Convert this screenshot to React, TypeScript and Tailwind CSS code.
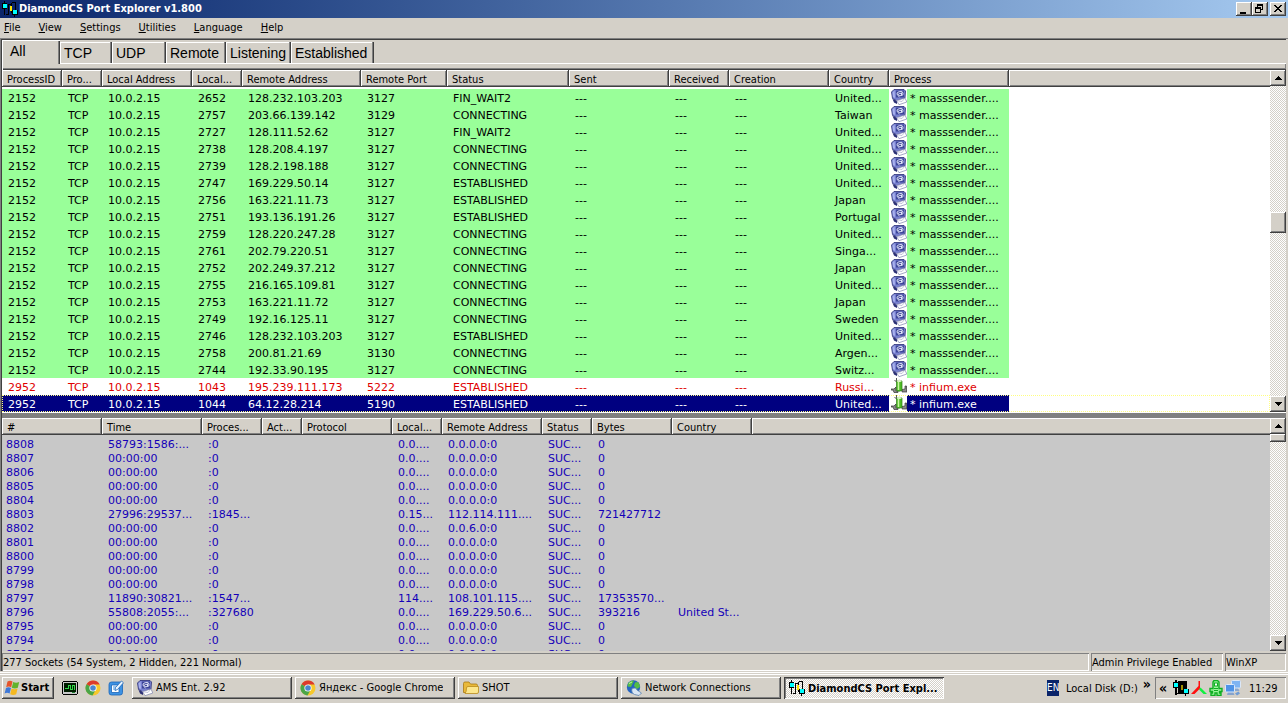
import { type ReactNode } from "react";
import clsx from "clsx";

const MENU = ["File", "View", "Settings", "Utilities", "Language", "Help"];

const TABS = [
  { label: "TCP", width: "w-[52px]" },
  { label: "UDP", width: "w-[54px]" },
  { label: "Remote", width: "w-[60px]" },
  { label: "Listening", width: "w-[65px]" },
  { label: "Established", width: "w-[83px]" },
];

type Column = { label: string; width: string };

const SOCKET_COLUMNS: Column[] = [
  { label: "ProcessID", width: "w-[60px]" },
  { label: "Pro...", width: "w-[40px]" },
  { label: "Local Address", width: "w-[90px]" },
  { label: "Local...", width: "w-[50px]" },
  { label: "Remote Address", width: "w-[119px]" },
  { label: "Remote Port", width: "w-[86px]" },
  { label: "Status", width: "w-[122px]" },
  { label: "Sent", width: "w-[100px]" },
  { label: "Received", width: "w-[60px]" },
  { label: "Creation", width: "w-[100px]" },
  { label: "Country", width: "w-[60px]" },
  { label: "Process", width: "w-[120px]" },
];

const LOG_COLUMNS: Column[] = [
  { label: "#", width: "w-[100px]" },
  { label: "Time", width: "w-[100px]" },
  { label: "Proces...", width: "w-[60px]" },
  { label: "Act...", width: "w-[40px]" },
  { label: "Protocol", width: "w-[90px]" },
  { label: "Local...", width: "w-[50px]" },
  { label: "Remote Address", width: "w-[100px]" },
  { label: "Status", width: "w-[50px]" },
  { label: "Bytes", width: "w-[80px]" },
  { label: "Country", width: "w-[80px]" },
];

type Kind = "normal" | "hidden" | "selected";
type Socket = [string, string, string, string, string, string, Kind];

// pid, local port, remote address, remote port, status, country, kind
const SOCKETS: Socket[] = [
  ["2152", "2652", "128.232.103.203", "3127", "FIN_WAIT2", "United...", "normal"],
  ["2152", "2757", "203.66.139.142", "3129", "CONNECTING", "Taiwan", "normal"],
  ["2152", "2727", "128.111.52.62", "3127", "FIN_WAIT2", "United...", "normal"],
  ["2152", "2738", "128.208.4.197", "3127", "CONNECTING", "United...", "normal"],
  ["2152", "2739", "128.2.198.188", "3127", "CONNECTING", "United...", "normal"],
  ["2152", "2747", "169.229.50.14", "3127", "ESTABLISHED", "United...", "normal"],
  ["2152", "2756", "163.221.11.73", "3127", "ESTABLISHED", "Japan", "normal"],
  ["2152", "2751", "193.136.191.26", "3127", "ESTABLISHED", "Portugal", "normal"],
  ["2152", "2759", "128.220.247.28", "3127", "CONNECTING", "United...", "normal"],
  ["2152", "2761", "202.79.220.51", "3127", "CONNECTING", "Singa...", "normal"],
  ["2152", "2752", "202.249.37.212", "3127", "CONNECTING", "Japan", "normal"],
  ["2152", "2755", "216.165.109.81", "3127", "CONNECTING", "United...", "normal"],
  ["2152", "2753", "163.221.11.72", "3127", "CONNECTING", "Japan", "normal"],
  ["2152", "2749", "192.16.125.11", "3127", "CONNECTING", "Sweden", "normal"],
  ["2152", "2746", "128.232.103.203", "3127", "ESTABLISHED", "United...", "normal"],
  ["2152", "2758", "200.81.21.69", "3130", "CONNECTING", "Argen...", "normal"],
  ["2152", "2744", "192.33.90.195", "3127", "CONNECTING", "Switz...", "normal"],
  ["2952", "1043", "195.239.111.173", "5222", "ESTABLISHED", "Russi...", "hidden"],
  ["2952", "1044", "64.12.28.214", "5190", "ESTABLISHED", "United...", "selected"],
];

const emptyLog = (id: string, remote = "0.0.0.0:0") => [
  id, "00:00:00", ":0", "", "", "0.0....", remote, "SUC...", "0", "",
];

const LOG: string[][] = [
  ["8808", "58793:1586:...", ":0", "", "", "0.0....", "0.0.0.0:0", "SUC...", "0", ""],
  emptyLog("8807"),
  emptyLog("8806"),
  emptyLog("8805"),
  emptyLog("8804"),
  ["8803", "27996:29537...", ":1845...", "", "", "0.15...", "112.114.111....", "SUC...", "721427712", ""],
  emptyLog("8802", "0.0.6.0:0"),
  emptyLog("8801"),
  emptyLog("8800"),
  emptyLog("8799"),
  emptyLog("8798"),
  ["8797", "11890:30821...", ":1547...", "", "", "114....", "108.101.115....", "SUC...", "17353570...", ""],
  ["8796", "55808:2055:...", ":327680", "", "", "0.0....", "169.229.50.6...", "SUC...", "393216", "United St..."],
  emptyLog("8795"),
  emptyLog("8794"),
  emptyLog("8793"),
];

const RAISED =
  "bg-[#d4d0c8] shadow-[inset_-1px_-1px_#404040,inset_1px_1px_#ffffff,inset_-2px_-2px_#808080]";
const SUNKEN = "shadow-[inset_1px_1px_#808080,inset_-1px_-1px_#ffffff]";
const DITHER =
  "bg-[repeating-conic-gradient(#ffffff_0_25%,#d4d0c8_0_50%)] bg-[length:2px_2px]";

/* ---------- icons ---------- */

function PortIcon({ dense = false }: { dense?: boolean }) {
  return (
    <svg width="16" height="16" viewBox="0 0 16 16" className="shrink-0" shapeRendering="crispEdges" aria-hidden>
      {dense && <path d="M5 1h8v8h-3v5H5zM2 0h2v15H2z" fill="#000" />}
      <path
        d="M2.5 0v3M2.5 8v6M4 13.5h2.5M6.5 3v10M6.5 3.5h3M9.5 2v6M13.500 1v9M10 1.5h4M12.500 13v3M9.5 8v4"
        fill="none"
        stroke="#000"
      />
      <rect x="0" y="2" width="5" height="6" fill="#000" />
      <rect x="1" y="3" width="4" height="4" fill="#00ffff" />
      <rect x="10" y="9" width="6" height="5" fill="#000" />
      <rect x="11" y="9" width="4" height="4" fill="#00ffff" />
      <rect x="8" y="5" width="2" height="5" fill={dense ? "#a09000" : "#ffe600"} />
    </svg>
  );
}

function MailIcon() {
  return (
    <svg width="16" height="16" viewBox="0 0 16 16" className="shrink-0" aria-hidden>
      <path d="M3 .5h10L14.500 2l-.5 7-4 1.500L6 12 1.500 9.500.5 3Z" fill="#7880cf" stroke="#2a2d74" strokeWidth=".8" />
      <path d="M1.500 3.500 3.500 1.500 4 9 2 8Z" fill="#aab2ee" />
      <path d="M5 1.500h8v7H5Z" fill="#3d4699" />
      <path
        d="M10.500 4.500q-3-1-3 1t3 1V3.500M10.500 6.500q2 0 1.500-2.500T8.500 2.500 6 5t2.500 3"
        fill="none"
        stroke="#eef0ff"
        strokeWidth=".9"
      />
      <path d="M1.500 10 3 13.500 6 15V12Z" fill="#2c3075" />
      <path d="m5.500 11.500 8.500-2.500 1.800 4L8 15.700Z" fill="#fff" stroke="#7d83ad" strokeWidth=".7" />
      <path d="m5.500 11.500 5.500 1L14 9" fill="none" stroke="#a7abc9" strokeWidth=".7" />
    </svg>
  );
}

function InfiumIcon() {
  return (
    <svg width="16" height="16" viewBox="0 0 16 16" className="shrink-0" aria-hidden>
      <path d="M3.500 2 6 4.500M5.500 0v4" stroke="#555" />
      <path d="M0 11h3l2-2v4h2v1.500H3L2 12H0ZM15.500 8v4.500H16V14h-5v-2.500l3-.5V8Z" fill="#8a8a8a" stroke="#333" strokeWidth=".7" />
      <path d="M5.500 3q2.500-1.500 5.500 0v9.500q-3 1.500-5.500 0Z" fill="#4dbb25" stroke="#2b7a14" strokeWidth=".7" />
      <path d="M7.500 4v8" stroke="#c9f7a2" strokeWidth="1.500" />
      <ellipse cx="8.200" cy="3" rx="2.600" ry="1" fill="#e3f5d0" />
    </svg>
  );
}

function ChromeIcon() {
  return (
    <svg width="16" height="16" viewBox="0 0 16 16" className="shrink-0" aria-hidden>
      <circle cx="8" cy="8" r="7.500" fill="#f6c82c" />
      <path d="M8 8 1.500 4.200A7.500 7.500 0 0 1 14.700 4.500L8 4.500Z" fill="#dc3a2c" />
      <path d="M1.500 4.200A7.500 7.500 0 0 0 7.500 15.500L10 11 8 8Z" fill="#4aa548" />
      <circle cx="8" cy="8" r="3.600" fill="#fff" />
      <circle cx="8" cy="8" r="2.800" fill="#4c86cf" />
    </svg>
  );
}

function WindowsIcon() {
  return (
    <svg width="16" height="16" viewBox="0 0 16 16" className="shrink-0" aria-hidden>
      <path d="M3.500 1.500q2.500-1.500 5 0L7.200 7.200q-2.500-1.300-5 0Z" fill="#e5542a" />
      <path d="M9.200 2q2.800 1.300 6 0L13.800 7.800q-2.800 1.300-6 0Z" fill="#62b32c" />
      <path d="M2 8q2.500-1.300 5 0L5.600 13.500q-2.500-1.300-5 0Z" fill="#3e78d8" />
      <path d="M7.600 8.600q2.800 1.300 6 0L12.200 14.300q-2.800 1.300-6 0Z" fill="#f5b921" />
    </svg>
  );
}

function MonitorIcon() {
  return (
    <svg width="16" height="16" viewBox="0 0 16 16" className="shrink-0" shapeRendering="crispEdges" aria-hidden>
      <path d="M1 1h14v1h1v12h-1v1H1v-1H0V2h1z" fill="#000" />
      <rect x="1" y="2" width="14" height="12" fill="#c9c9c9" />
      <rect x="2" y="3" width="12" height="9" fill="#001c00" />
      <path d="M3 8.500h3V5.500h2v4h2V5.500h2v4h1" stroke="#32d848" fill="none" />
      <path d="M10 12.500h3" stroke="#208030" />
    </svg>
  );
}

function DesktopIcon() {
  return (
    <svg width="16" height="16" viewBox="0 0 16 16" className="shrink-0" aria-hidden>
      <rect x="1" y="2" width="13.500" height="13" rx="2.500" fill="#3d92e3" stroke="#1b64b8" strokeWidth=".8" />
      <path d="M3.500 5H11v7.500H3.500Z" fill="#fff" stroke="#1b64b8" strokeWidth=".8" />
      <path d="M5 7h4M5 9h2" stroke="#3d92e3" />
      <path d="m7 10.500.5-3L13.500 1l2 1.800L9.500 9.500Z" fill="#e9f4ff" stroke="#1b64b8" strokeWidth=".8" />
    </svg>
  );
}

function FolderIcon() {
  return (
    <svg width="16" height="16" viewBox="0 0 16 16" className="shrink-0" aria-hidden>
      <path d="M.5 12.500V3.500Q.5 2 2 2h4l1.500 2H13q1.500 0 1.500 1.500v7Z" fill="#e9b93a" stroke="#a87812" strokeWidth=".8" />
      <path d="M2 13.500Q3.500 12 3.500 8q0-1.500 1.500-1.500h10.500V12q0 1.500-1.500 1.500Z" fill="#fce68c" stroke="#b98a1c" strokeWidth=".8" />
    </svg>
  );
}

function GlobeIcon() {
  return (
    <svg width="16" height="16" viewBox="0 0 16 16" className="shrink-0" aria-hidden>
      <circle cx="7.500" cy="7" r="6.700" fill="#2463c0" />
      <path d="M2 3.500Q4 .5 8 .5L7 3 5 7 1.500 6.500ZM9 2.500l3-.5q2 2 2 5l-3 2-3-3Z" fill="#55bd45" />
      <path d="M3 3.500 6 2" stroke="#c4f0a8" />
      <path d="M6 8.500q4.500-1.500 5 1.500l4.500 3-2.500 2.500-4.500-1Q5 13 6 8.500Z" fill="#d9e6f4" stroke="#5b82ae" strokeWidth=".8" />
    </svg>
  );
}

function NetworkIcon() {
  return (
    <svg width="16" height="16" viewBox="0 0 16 16" className="shrink-0" aria-hidden>
      <path d="M9 8h4l1.500 3H8Z" fill="#8aa6cc" />
      <rect x="6.500" y=".5" width="9" height="7.500" rx="1" fill="#7fb4f2" stroke="#dbe7f7" />
      <path d="M3 11.500h5l1.500 3.500H2Z" fill="#86a3cc" />
      <rect x=".5" y="4.500" width="9" height="7.500" rx="1" fill="#4f93e6" stroke="#dce9fa" />
      <path d="m10 13.500 3.500-2 1.500 2-3 2Z" fill="#6f9cd6" />
    </svg>
  );
}

function SpikeIcon() {
  return (
    <svg width="16" height="16" viewBox="0 0 16 16" className="shrink-0" aria-hidden>
      <path d="M7.500 1H9v7.500L3.500 14H0L7.500 6Z" fill="#ff1010" />
      <path d="M9.500 7.500 16 14h-3.500L8 9.500Z" fill="#10f040" />
    </svg>
  );
}

function PhoneIcon() {
  return (
    <svg width="14" height="16" viewBox="0 0 14 16" className="shrink-0" aria-hidden>
      <path
        d="M5 .5h3.500L10 2v6.500h3v3h-2.500V13H12v2.500H8V13H6v2.500H2V13h1.500v-1.500H1v-3h3V2Z"
        fill="#9af59a"
        stroke="#0fae22"
        strokeWidth="1.400"
      />
      <rect x="5.500" y="3" width="3" height="3" fill="#fff" stroke="#0fae22" />
      <path d="M5 8.500h4M5 10.500h4" stroke="#0fae22" />
    </svg>
  );
}

/* ---------- pieces ---------- */

function TitleButton({ label, children }: { label: string; children: ReactNode }) {
  return (
    <button type="button" aria-label={label} className={clsx("h-[14px] w-4", RAISED)}>
      <svg width="16" height="14" viewBox="0 0 16 14" shapeRendering="crispEdges" aria-hidden>
        {children}
      </svg>
    </button>
  );
}

function ScrollButton({ up = false }: { up?: boolean }) {
  return (
    <button
      type="button"
      aria-label={up ? "Scroll up" : "Scroll down"}
      className={clsx("flex h-4 w-4 shrink-0 items-center justify-center", RAISED)}
    >
      <svg width="7" height="4" viewBox="0 0 7 4" shapeRendering="crispEdges" aria-hidden>
        <path d={up ? "M3 0h1v1h1v1h1v1h1v1H0V3h1V2h1V1h1Z" : "M0 0h7v1H6v1H5v1H4v1H3V3H2V2H1V1H0Z"} />
      </svg>
    </button>
  );
}

function ScrollBar({ children }: { children: ReactNode }) {
  return (
    <div className={clsx("flex w-4 shrink-0 flex-col", DITHER)}>
      <ScrollButton up />
      <div className="min-h-0 flex-1">{children}</div>
      <ScrollButton />
    </div>
  );
}

function HeaderRow({ columns }: { columns: Column[] }) {
  return (
    <thead>
      <tr>
        {columns.map((column) => (
          <th key={column.label} scope="col" className={clsx("p-0 pb-[2px] text-left font-normal", column.width)}>
            <div className={clsx("h-[17px] overflow-hidden pt-[2px] pl-[5px] leading-[15px] whitespace-nowrap", RAISED)}>
              {column.label}
            </div>
          </th>
        ))}
        <td className="p-0 pb-[2px]">
          <div className="h-[17px] bg-[#d4d0c8] shadow-[inset_0_-1px_#404040,inset_1px_1px_#ffffff,inset_0_-2px_#808080]" />
        </td>
      </tr>
    </thead>
  );
}

const ROW_STYLE: Record<Kind, string> = {
  normal: "text-black",
  hidden: "text-[#e00000]",
  selected: "text-white outline-1 -outline-offset-1 outline-dotted outline-[#ffff80]",
};

const CELL_STYLE: Record<Kind, string> = {
  normal: "bg-[#99ff99]",
  hidden: "bg-white",
  selected: "bg-[#000080]",
};

function SocketTable() {
  return (
    <table className="w-full table-fixed border-collapse">
      <HeaderRow columns={SOCKET_COLUMNS} />
      <tbody className="font-['DejaVu_Sans',sans-serif]">
        {SOCKETS.map(([pid, port, remote, remotePort, status, country, kind]) => {
          const cells = [pid, "TCP", "10.0.2.15", port, remote, remotePort, status, "---", "---", "---", country];
          return (
            <tr key={port} className={ROW_STYLE[kind]}>
              {cells.map((cell, i) => (
                <td
                  key={i}
                  className={clsx("h-[17px] p-0 pt-[2px] pl-[6px] leading-[15px] whitespace-nowrap", CELL_STYLE[kind])}
                >
                  {cell}
                </td>
              ))}
              <td className={clsx("h-[17px] p-0 whitespace-nowrap", CELL_STYLE[kind])}>
                <div className="flex h-[17px]">
                  <span className="flex w-[18px] shrink-0 justify-end bg-white">
                    {kind === "normal" ? <MailIcon /> : <InfiumIcon />}
                  </span>
                  <span className="pt-[2px] pl-[3px] leading-[15px]">
                    * {kind === "normal" ? "masssender...." : "infium.exe"}
                  </span>
                </div>
              </td>
            </tr>
          );
        })}
      </tbody>
    </table>
  );
}

function LogTable() {
  return (
    <table className="w-full table-fixed border-collapse">
      <HeaderRow columns={LOG_COLUMNS} />
      <tbody className="font-['DejaVu_Sans',sans-serif] text-[#1400b8]">
        {LOG.map((row) => (
          <tr key={row[0]}>
            {row.map((cell, i) => (
              <td
                key={i}
                className={clsx("h-[14px] p-0 pt-[2px] leading-[12px] whitespace-nowrap", i === 0 ? "pl-1" : "pl-[6px]")}
              >
                {cell}
              </td>
            ))}
          </tr>
        ))}
      </tbody>
    </table>
  );
}

function TaskButton({ icon, label }: { icon: ReactNode; label: string }) {
  return (
    <button type="button" className={clsx("flex h-[22px] w-40 items-center gap-[3px] pl-[5px] text-left", RAISED)}>
      {icon}
      <span className="truncate pt-px">{label}</span>
    </button>
  );
}

export default function App() {
  return (
    <div className="flex h-screen flex-col overflow-hidden bg-[#d4d0c8] font-['DejaVu_Sans_Condensed','DejaVu_Sans',sans-serif] text-[11px] text-black">
      <header className="flex h-[18px] shrink-0 items-center bg-linear-to-r from-[#0a246a] to-[#a6caf0] px-[2px]">
        <PortIcon />
        <h1 className="flex-1 pt-px pl-px font-bold text-white">DiamondCS Port Explorer v1.800</h1>
        <div className="flex gap-[2px]">
          <div className="flex">
            <TitleButton label="Minimize">
              <path d="M4 10h6v2H4z" />
            </TitleButton>
            <TitleButton label="Restore">
              <path d="M5 2h6v6H9V7h1V4H6v1H5zM3 5h6v6H3zM4 7v3h4V7z" fillRule="evenodd" />
            </TitleButton>
          </div>
          <TitleButton label="Close">
            <path d="M4 3h2v1h1v1h2V4h1V3h2v1h-1v1h-1v1H9v1h1v1h1v1h1v1h-2V9H9V8H7v1H6v1H4V9h1V8h1V7h1V6H6V5H5V4H4z" />
          </TitleButton>
        </div>
      </header>

      <nav className="flex h-5 shrink-0 items-center gap-[18px] pt-px pl-1">
        {MENU.map((item) => (
          <button key={item} type="button">
            <span className="underline">{item[0]}</span>
            {item.slice(1)}
          </button>
        ))}
      </nav>

      <main className="flex min-h-0 flex-1 flex-col border-t border-l border-[#808080] pr-[2px]">
        <div className="flex min-h-0 flex-1 flex-col border-t border-l border-[#404040]">
          <div role="tablist" className="flex h-6 shrink-0 items-end font-['Liberation_Sans',Arial,sans-serif] text-[14px]">
            <button
              type="button"
              role="tab"
              aria-selected
              className="flex h-6 w-[58px] items-start border-t border-l border-white pt-[2px] pl-[7px] leading-[17px] shadow-[inset_-1px_0_#404040,inset_-2px_0_#808080]"
            >
              All
            </button>
            {TABS.map((tab) => (
              <button
                key={tab.label}
                type="button"
                role="tab"
                aria-selected={false}
                className={clsx(
                  "flex h-[22px] items-center border-b border-white pl-1 leading-[18px] shadow-[inset_-1px_0_#404040,inset_-2px_0_#808080,inset_1px_1px_#ffffff]",
                  tab.width,
                )}
              >
                {tab.label}
              </button>
            ))}
            <div className="h-px flex-1 bg-white" />
          </div>
          <div className="h-[6px] shrink-0 border-l border-white shadow-[inset_0_-1px_#404040,inset_-1px_-2px_#808080]" />

          <section aria-label="Sockets" className="flex shrink-0 bg-white pb-px">
            <div className="min-w-0 flex-1 overflow-hidden">
              <SocketTable />
            </div>
            <ScrollBar>
              <div className="flex h-full flex-col">
                <div className="grow-126" />
                <div className={clsx("h-[21px] shrink-0", RAISED)} />
                <div className="grow-164" />
              </div>
            </ScrollBar>
          </section>

          <div className="h-[5px] shrink-0 bg-[#808080]" />

          <section aria-label="Packet log" className="flex min-h-0 flex-1 bg-[#c8c8c8]">
            <div className="min-w-0 flex-1 overflow-hidden">
              <LogTable />
            </div>
            <ScrollBar>
              <div className={clsx("h-[8px]", RAISED)} />
            </ScrollBar>
          </section>

          <footer className="flex h-[20px] shrink-0 gap-[2px] pt-[2px]">
            <div className={clsx("min-w-0 flex-1 pt-px pl-px leading-[17px]", SUNKEN)}>
              277 Sockets (54 System, 2 Hidden, 221 Normal)
            </div>
            <div className={clsx("w-[132px] pt-px pl-px leading-[17px]", SUNKEN)}>Admin Privilege Enabled</div>
            <div className={clsx("w-[61px] pt-px pl-px leading-[17px]", SUNKEN)}>WinXP</div>
          </footer>
        </div>
      </main>

      <div className="flex h-8 shrink-0 items-center gap-[3px] px-[2px] pt-[2px] shadow-[inset_0_1px_#d4d0c8,inset_0_2px_#ffffff,inset_0_3px_#d4d0c8,inset_0_4px_#ffffff]">
        <button type="button" className={clsx("flex h-[22px] w-[52px] items-center gap-px pl-[2px] font-bold", RAISED)}>
          <WindowsIcon />
          <span className="pt-px">Start</span>
        </button>
        <div className="flex w-[72px] items-center gap-[7px] pl-[5px]">
          <button type="button" aria-label="Monitor"><MonitorIcon /></button>
          <button type="button" aria-label="Chrome"><ChromeIcon /></button>
          <button type="button" aria-label="Show desktop"><DesktopIcon /></button>
        </div>
        <TaskButton icon={<MailIcon />} label="AMS Ent. 2.92" />
        <TaskButton icon={<ChromeIcon />} label="Яндекс - Google Chrome" />
        <TaskButton icon={<FolderIcon />} label="SHOT" />
        <TaskButton icon={<GlobeIcon />} label="Network Connections" />
        <button
          type="button"
          className={clsx(
            "flex h-[22px] w-40 items-center gap-[3px] pl-[5px] text-left font-bold shadow-[inset_1px_1px_#404040,inset_-1px_-1px_#ffffff,inset_2px_2px_#808080]",
            DITHER,
          )}
        >
          <PortIcon />
          <span className="pt-[2px] whitespace-nowrap">DiamondCS Port Expl...</span>
        </button>
        <div className="flex-1" />
        <span className="h-4 w-3 overflow-hidden bg-[#0a246a] text-[10px] leading-[16px] text-white">EN</span>
        <span className="pt-[2px] pl-1 whitespace-nowrap">Local Disk (D:)</span>
        <span className="pb-2 pl-[2px] text-[14px] leading-none font-bold">»</span>
        <div className={clsx("ml-px flex h-[22px] w-[131px] items-center gap-[2px] pl-1", SUNKEN)}>
          <span className="w-3 text-[14px] leading-none font-bold">«</span>
          <PortIcon dense />
          <SpikeIcon />
          <PhoneIcon />
          <NetworkIcon />
          <time className="pt-[2px] pl-[6px]">11:29</time>
        </div>
      </div>
    </div>
  );
}
